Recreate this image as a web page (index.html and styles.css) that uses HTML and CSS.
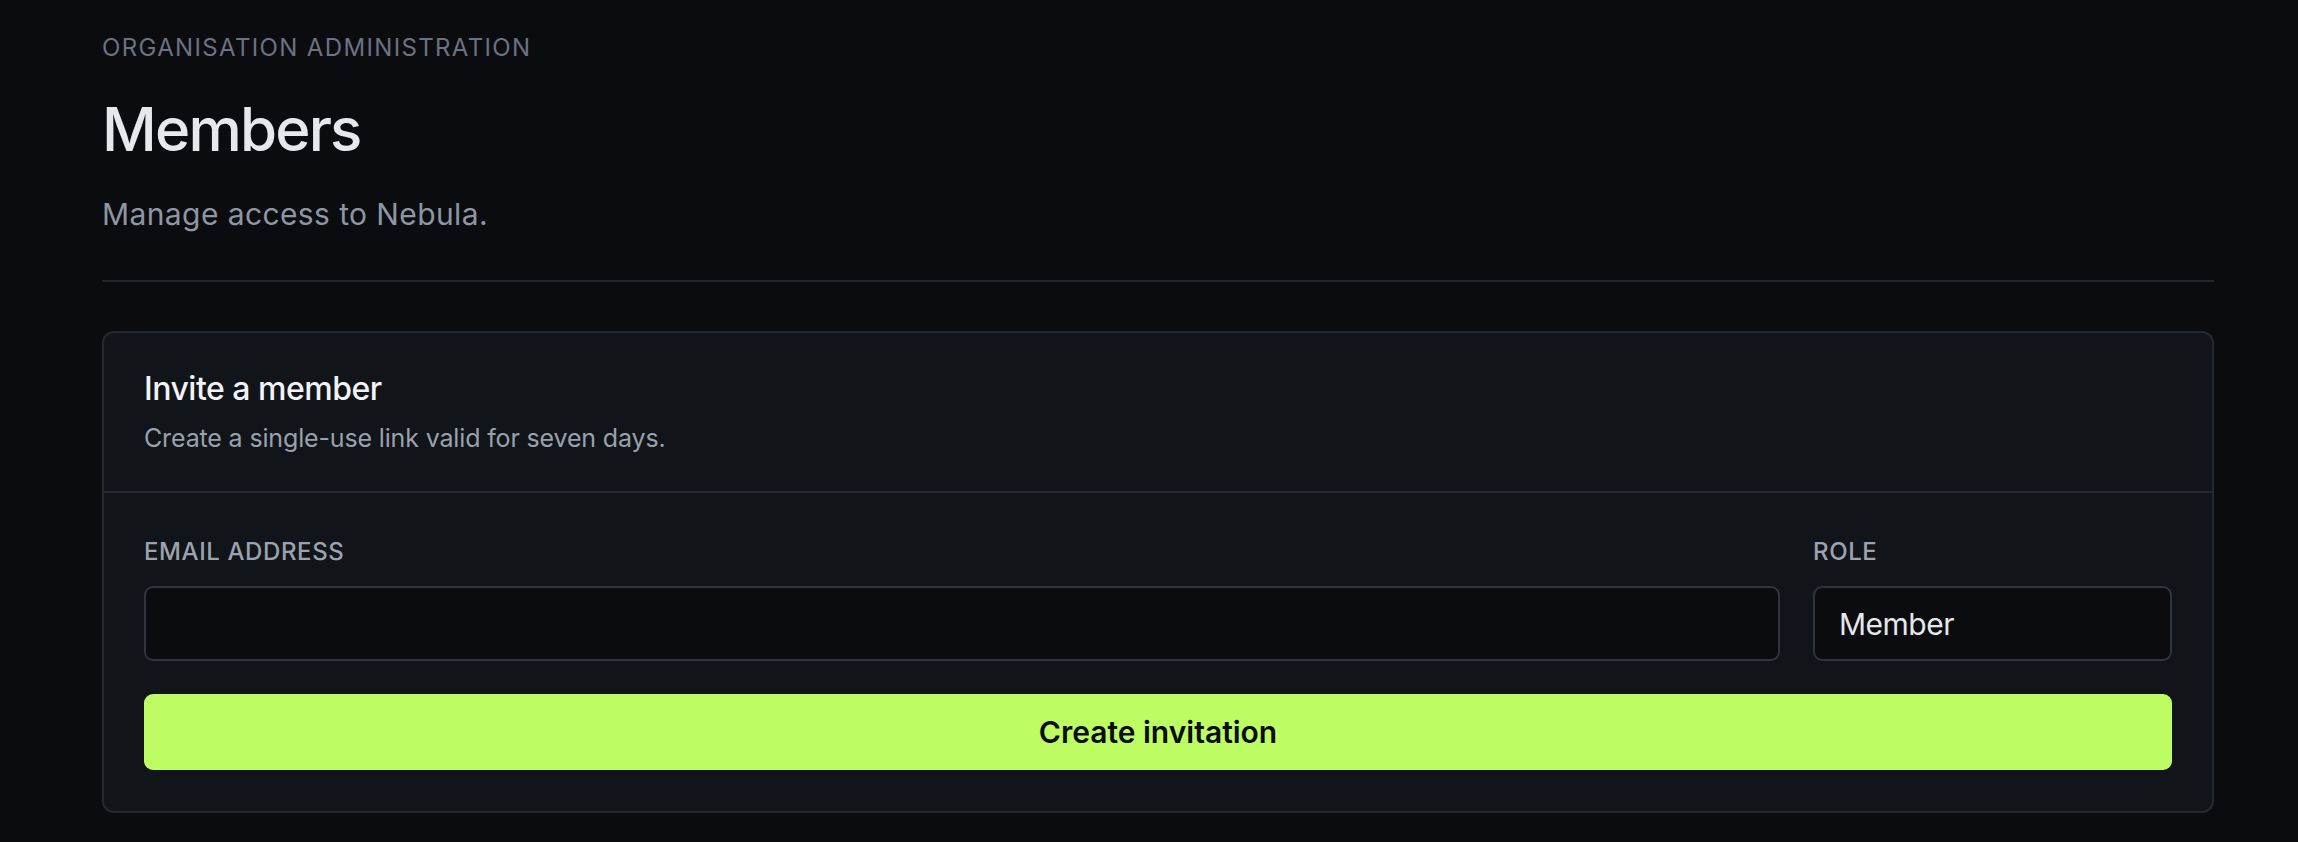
FILE: index.html
```html
<!DOCTYPE html>
<html lang="en">
<head>
<meta charset="utf-8">
<title>Members</title>
<link rel="stylesheet" href="styles.css">
</head>
<body>
<main class="page">
  <header class="page-header">
    <p class="eyebrow">Organisation administration</p>
    <h1 class="title">Members</h1>
    <p class="lead">Manage access to Nebula.</p>
  </header>
  <section class="card">
    <div class="card-head">
      <h2 class="card-title">Invite a member</h2>
      <p class="card-desc">Create a single-use link valid for seven days.</p>
    </div>
    <form class="card-body">
      <div class="fields">
        <label class="field">
          <span class="field-label">Email address</span>
          <input class="control" type="email" name="email">
        </label>
        <label class="field">
          <span class="field-label">Role</span>
          <select class="control control-select" name="role">
            <option>Member</option>
            <option>Admin</option>
          </select>
        </label>
      </div>
      <button class="btn-primary" type="button">Create invitation</button>
    </form>
  </section>
</main>
</body>
</html>
```
FILE: styles.css
```css
* { box-sizing: border-box; }

html, body {
  margin: 0;
  background: #0b0c0f;
}

body {
  font-family: Inter, "Noto Sans", sans-serif;
  color: #e5e7eb;
}

.page {
  margin: 0 84px 0 102px;
  padding-top: 30px;
}

.page-header {
  padding-bottom: 43px;
  border-bottom: 2px solid #22262d;
}

.eyebrow {
  margin: 0;
  font-size: 24px;
  line-height: 36px;
  letter-spacing: 1.35px;
  text-transform: uppercase;
  color: #6b7280;
}

.title {
  margin: 30px 0 0;
  font-size: 60px;
  line-height: 66px;
  font-weight: 500;
  letter-spacing: -1.8px;
  color: #e6e8ee;
}

.lead {
  margin: 30px 0 0;
  font-size: 30px;
  line-height: 45px;
  letter-spacing: 0.4px;
  color: #8f96a3;
}

.card {
  margin-top: 49px;
  background: #111419;
  border: 2px solid #252930;
  border-radius: 12px;
}

.card-head {
  padding: 36px 40px 35px;
  border-bottom: 2px solid #252930;
}

.card-title {
  margin: 0;
  font-size: 32px;
  line-height: 40px;
  font-weight: 500;
  letter-spacing: -0.5px;
  color: #f1f3f6;
}

.card-desc {
  margin: 11px 0 0;
  font-size: 25px;
  line-height: 36px;
  letter-spacing: -0.15px;
  color: #9aa1ad;
}

.card-body {
  padding: 43px 40px 41px;
}

.fields {
  display: grid;
  grid-template-columns: 1fr 359px;
  column-gap: 33px;
}

.field {
  display: flex;
  flex-direction: column;
  gap: 18px;
}

.field-label {
  font-size: 24px;
  line-height: 32px;
  font-weight: 500;
  letter-spacing: 0.6px;
  text-transform: uppercase;
  color: #9ca3af;
}

.control {
  display: block;
  width: 100%;
  height: 75px;
  margin: 0;
  padding: 0 24px;
  background: #0b0c0f;
  border: 2px solid #30353d;
  border-radius: 9px;
  color: #e5e7eb;
  font-family: inherit;
  font-size: 30px;
  letter-spacing: -0.5px;
  outline: none;
}

.control-select {
  appearance: none;
  -webkit-appearance: none;
}

.btn-primary {
  display: block;
  width: 100%;
  height: 76px;
  margin-top: 33px;
  background: #befc64;
  border: none;
  border-radius: 9px;
  color: #0b0c0f;
  font-family: inherit;
  font-size: 30px;
  font-weight: 600;
  cursor: pointer;
}
```
